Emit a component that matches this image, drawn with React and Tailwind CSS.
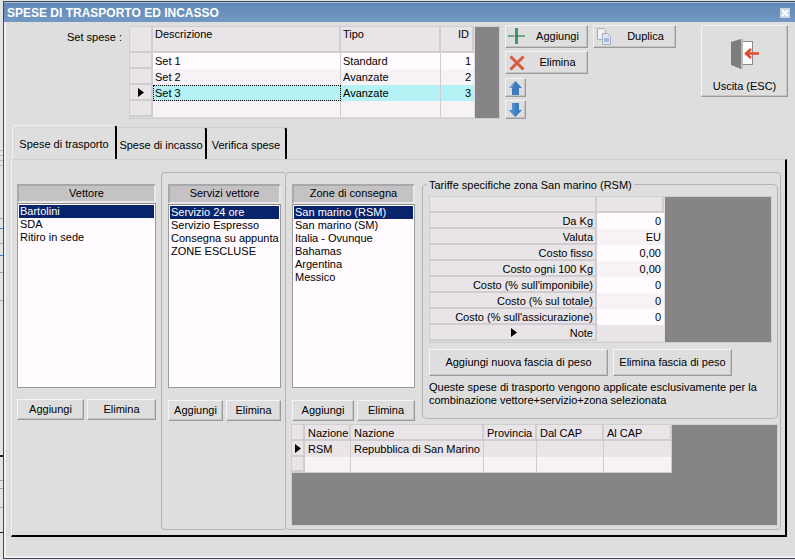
const Btn = ({ className = "", children }) => (
  <div className={"flex items-center justify-center bg-[#dedede] border border-t-[#f4f4f4] border-l-[#f4f4f4] border-r-[#9a9a9a] border-b-[#9a9a9a] shadow-[inset_-1px_-1px_0_#c4c4c4] text-black " + className}>{children}</div>
);
const Arrow = () => (
  <svg width="6" height="9" viewBox="0 0 6 9"><path d="M0 0l6 4.500L0 9z" fill="#000" /></svg>
);
const Plus = () => (
  <svg width="17" height="16" viewBox="0 0 17 16"><rect x="7" y="0" width="3" height="16" fill="#3f9a6b" /><rect x="0" y="7" width="17" height="2" fill="#6aa88a" /><rect x="6" y="7" width="1" height="2" fill="#e9a3c0" /><rect x="7" y="7" width="3" height="2" fill="#2f8a5b" /></svg>
);
const Cross = () => (
  <svg width="16" height="16" viewBox="0 0 16 16"><path d="M1.500 1.500l13 13M14.500 1.500l-13 13" stroke="#d9573f" strokeWidth="3" /></svg>
);
const Copy = () => (
  <svg width="16" height="17" viewBox="0 0 16 17">
    <path d="M1.500.5h6l2 2v9h-8z" fill="#eef1f5" stroke="#a9aeb5" />
    <path d="M6.500 5.500h5l3 3v8h-8z" fill="#dfe7f2" stroke="#a9aeb5" />
    <rect x="8" y="10" width="5" height="4" fill="#9dbbe0" />
  </svg>
);
const Up = () => (
  <svg width="13" height="14" viewBox="0 0 13 14"><path d="M6.500 0L13 7h-3v7H3V7H0z" fill="#3c7dc0" /><path d="M6.500 0L0 7h3z" fill="#6fa3d8" /></svg>
);
const Down = () => (
  <svg width="13" height="14" viewBox="0 0 13 14"><path d="M6.500 14L13 7h-3V0H3v7H0z" fill="#3c7dc0" /><path d="M3 0h3v14L0 7h3z" fill="#4f8cc9" /></svg>
);
const Door = () => (
  <svg width="28" height="31" viewBox="0 0 28 31">
    <rect x="10.500" y="3.500" width="11" height="23" fill="#fff" stroke="#8a8a8a" />
    <path d="M0 4l10-3v30L0 27z" fill="#7d7d7d" />
    <path d="M10 1h2v30h-2z" fill="#b8b8b8" />
    <path d="M28 15.500H16M20 11l-5 4.500 5 4.500" fill="none" stroke="#e0492f" strokeWidth="2.500" />
  </svg>
);

const rowHeader = "border-r-2 border-b-2 border-[#cfcdcf] bg-[#e8e4e8]";

function TopGrid() {
  const rows = [["Set 1", "Standard", "1", "bg-[#fffbff]"], ["Set 2", "Avanzate", "2", "bg-[#f6f2f6]"], ["Set 3", "Avanzate", "3", "bg-[#b4f2f6]"], ["", "", "", "bg-[#f6f2f6]"]];
  return (
    <div className="mt-[1px] w-[371px] h-[93px] flex bg-[#dedede] border border-[#cfcfcf]">
      <div className="w-[344px]">
        <div className="flex h-[26px] leading-[14px]">
          <div className={"w-[23px] " + rowHeader}></div>
          <div className={"w-[188px] pl-[2px] " + rowHeader}>Descrizione</div>
          <div className={"w-[100px] pl-[2px] " + rowHeader}>Tipo</div>
          <div className={"w-[33px] pr-[3px] text-right " + rowHeader}>ID</div>
        </div>
        {rows.map((r, i) => (
          <div key={i} className={"flex h-[16px] leading-[16px] " + r[3]}>
            <div className="w-[23px] flex items-center justify-center bg-[#e8e4e8] border-r-2 border-b-2 border-[#cfcdcf]">{i === 2 && <Arrow />}</div>
            <div className={"w-[188px] pl-[2px] border-r border-[#cfcdcf] " + (i === 2 ? "outline-1 outline-dotted outline-black -outline-offset-1" : "")}>{r[0]}</div>
            <div className="w-[100px] pl-[2px] border-r border-[#cfcdcf]">{r[1]}</div>
            <div className="w-[33px] pr-[3px] text-right">{r[2]}</div>
          </div>
        ))}
      </div>
      <div className="flex-1 ml-[1px] bg-[#868486]"></div>
    </div>
  );
}

function ListCol({ title, items, w, headH = 20, listH = 184, btnGap = 12, bw, eb, btnH = 19 }) {
  return (
    <div className="flex flex-col" style={{ width: w }}>
      <div className="bg-[#c4c2c4] border-2 border-t-[#a8a8a8] border-l-[#a8a8a8] border-r-[#e8e8e8] border-b-[#e8e8e8] pb-[1px] flex items-center justify-center" style={{ height: headH }}>{title}</div>
      <div className="bg-[#fffbff] border border-[#9a9a9a] border-t-[#8a8a8a] p-[1px] overflow-hidden" style={{ height: listH }}>
        {items.map((t, i) => (
          <div key={t} className={"h-[13px] leading-[13px] pl-[1px] whitespace-nowrap overflow-hidden " + (i === 0 ? "bg-[#08246b] text-white" : "")}>{t}</div>
        ))}
      </div>
      <div className="flex justify-between" style={{ marginTop: btnGap }}>
        <Btn><span style={{ width: bw, height: btnH }} className="flex items-center justify-center">Aggiungi</span></Btn>
        <Btn><span style={{ width: eb, height: btnH }} className="flex items-center justify-center">Elimina</span></Btn>
      </div>
    </div>
  );
}

function Tariffe() {
  const rows = [["Da Kg", "0"], ["Valuta", "EU"], ["Costo fisso", "0,00"], ["Costo ogni 100 Kg", "0,00"], ["Costo (% sull'imponibile)", "0"], ["Costo (% sul totale)", "0"], ["Costo (% sull'assicurazione)", "0"], ["Note", ""]];
  return (
    <div className="relative ml-[7px] w-[356px] h-[235px] border border-[#b4b4b4] rounded-[5px] pt-[11px] pl-[6px]">
      <div className="absolute left-[4px] -top-[7px] bg-[#dedede] px-[2px] leading-[14px] whitespace-nowrap">Tariffe specifiche zona San marino (RSM)</div>
      <div className="w-[343px] h-[147px] flex border border-[#cfcfcf] bg-[#dedede]">
        <div className="w-[234px]">
          <div className="flex h-[16px]">
            <div className={"w-[167px] " + rowHeader}></div>
            <div className={"w-[67px] " + rowHeader}></div>
          </div>
          {rows.map((r, i) => (
            <div key={r[0]} className="flex h-[16px] leading-[16px]">
              <div className={"relative w-[167px] pr-[2px] text-right " + rowHeader}>
                {i === 7 && <span className="absolute left-[81px] top-[3px] leading-none"><Arrow /></span>}
                {r[0]}
              </div>
              <div className={"w-[67px] pr-[3px] text-right " + (i === 7 ? "bg-[#e8e4e8]" : i % 2 === 0 ? "bg-[#fffbff]" : "bg-[#f6f2f6]")}>{r[1]}</div>
            </div>
          ))}
        </div>
        <div className="flex-1 ml-[1px] bg-[#868486]"></div>
      </div>
      <div className="flex gap-[5px] mt-[6px]">
        <Btn className="w-[179px] h-[27px]">Aggiungi nuova fascia di peso</Btn>
        <Btn className="w-[119px] h-[27px]">Elimina fascia di peso</Btn>
      </div>
      <div className="mt-[5px] leading-[13px] w-[345px]">Queste spese di trasporto vengono applicate esclusivamente per la combinazione vettore+servizio+zona selezionata</div>
    </div>
  );
}

function BottomGrid() {
  const cols = [["Nazione", "w-[46px]"], ["Nazione", "w-[133px]"], ["Provincia", "w-[53px]"], ["Dal CAP", "w-[67px]"], ["Al CAP", "w-[68px]"]];
  const vals = ["RSM", "Repubblica di San Marino", "", "", ""];
  const cell = "pl-[3px] border-r border-[#cfcdcf] whitespace-nowrap ";
  return (
    <div className="mt-[3px] ml-[5px] h-[102px] w-[487px] bg-[#868486] border border-[#cfcfcf] overflow-hidden">
      <div className="w-[380px]">
        <div className="flex h-[16px] leading-[16px]">
          <div className={"w-[13px] " + rowHeader}></div>
          {cols.map((c, i) => <div key={i} className={c[1] + " pl-[3px] " + rowHeader}>{c[0]}</div>)}
        </div>
        <div className="flex h-[16px] leading-[16px] bg-[#e8e4e8]">
          <div className={"w-[13px] flex items-center justify-center " + rowHeader}><Arrow /></div>
          {cols.map((c, i) => <div key={i} className={c[1] + " " + cell}>{vals[i]}</div>)}
        </div>
        <div className="flex h-[16px] bg-[#f6f2f6] border-b border-[#cfcdcf]">
          <div className={"w-[13px] " + rowHeader}></div>
          {cols.map((c, i) => <div key={i} className={c[1] + " " + cell}></div>)}
        </div>
      </div>
    </div>
  );
}

const bits = [[150, "#bdbdbd", 1], [155, "#bdbdbd", 1], [160, "#bdbdbd", 1], [165, "#bdbdbd", 1], [218, "#a8a8a8", 1], [228, "#3c7dc0", 1], [243, "#a8a8a8", 1], [255, "#3c7dc0", 1], [272, "#a8a8a8", 1], [300, "#a8a8a8", 1], [455, "#222222", 2], [480, "#a8a8a8", 1], [488, "#a8a8a8", 1], [507, "#a8a8a8", 1], [532, "#222222", 1]];

export default function App() {
  return (
    <div className="relative w-[795px] h-[560px] overflow-hidden bg-[#e4e4e4] pl-[3px] pt-[1px] text-[11px] text-black" style={{ fontFamily: '"Liberation Sans", Arial, sans-serif' }}>
      {bits.map((b, i) => <span key={i} className="absolute left-0 w-[3px]" style={{ top: b[0], height: b[2], background: b[1] }}></span>)}
      <div className="w-[792px] h-[558px] border-t border-l border-b border-[#3c4a5c] bg-[#dedede] flex flex-col">
        <div className="h-[20px] flex items-center justify-between pl-[3px] pr-[5px] bg-gradient-to-b from-[#6289b6] to-[#7299c4] border-t border-[#a9bfd8] text-white font-bold text-[12px]">
          <span>SPESE DI TRASPORTO ED INCASSO</span>
          <span className="w-[10px] h-[10px] bg-[#c5d3e3] flex items-center justify-center">
            <svg width="8" height="8" viewBox="0 0 8 8"><path d="M1 1l6 6M7 1L1 7" stroke="#ffffff" strokeWidth="2" /></svg>
          </span>
        </div>
        <div className="flex-1 flex flex-col border-l-2 border-b-2 border-[#f0f0f0] pl-[1px]">
          <div className="flex h-[103px] pt-[3px]">
            <div className="w-[122px] pt-[4px] pr-[7px] text-right whitespace-nowrap">Set spese :</div>
            <TopGrid />
            <div className="ml-[5px] w-[83px] flex flex-col">
              <Btn className="h-[23px] relative pl-[22px]"><span className="absolute left-[2px] top-[2px]"><Plus /></span>Aggiungi</Btn>
              <Btn className="h-[23px] relative mt-[3px] pl-[22px]"><span className="absolute left-[3px] top-[3px]"><Cross /></span>Elimina</Btn>
              <Btn className="w-[21px] h-[19px] mt-[4px]"><Up /></Btn>
              <Btn className="w-[21px] h-[19px] mt-[3px]"><Down /></Btn>
            </div>
            <Btn className="ml-[5px] w-[83px] h-[23px] relative pl-[22px]"><span className="absolute left-[2px] top-[2px]"><Copy /></span>Duplica</Btn>
            <Btn className="ml-[25px] w-[87px] h-[72px] flex-col !justify-start gap-[11px] pt-[12px]"><Door /><span className="leading-[13px]">Uscita (ESC)</span></Btn>
          </div>
          <div className="flex items-end h-[34px] pl-[5px]">
            <div className="h-[34px] pt-[3px] w-[105px] border-r-2 border-r-black border-t border-l border-[#f0f0f0] rounded-t-[3px] flex items-center justify-center">Spese di trasporto</div>
            <div className="h-[32px] pt-[3px] w-[90px] border-r-2 border-r-black border-t border-[#d0d0d0] rounded-t-[3px] flex items-center justify-center">Spese di incasso</div>
            <div className="h-[32px] pt-[3px] w-[80px] border-r-2 border-r-black border-t border-[#d0d0d0] rounded-t-[3px] flex items-center justify-center">Verifica spese</div>
          </div>
          <div className="ml-[4px] w-[776px] h-[378px] border-t border-t-[#d0d0d0] border-l border-l-[#f0f0f0] border-r-2 border-b-2 border-r-black border-b-black flex pl-[5px] pt-[12px]">
            <div className="w-[144px] pt-[12px] shrink-0">
              <ListCol title="Vettore" items={["Bartolini", "SDA", "Ritiro in sede"]} w={139} headH={19} listH={185} btnGap={11} bw={65} eb={67} />
            </div>
            <div className="w-[124px] h-[358px] border-t border-b border-l border-[#b4b4b4] rounded-l-[4px] pl-[6px] pt-[11px] shrink-0">
              <ListCol title="Servizi vettore" items={["Servizio 24 ore", "Servizio Espresso", "Consegna su appuntamento", "ZONE ESCLUSE"]} w={113} bw={53} eb={53} />
            </div>
            <div className="w-[496px] h-[358px] border border-[#b4b4b4] rounded-[4px] pt-[11px] shrink-0">
              <div className="flex pl-[6px]">
                <ListCol title="Zone di consegna" items={["San marino (RSM)", "San marino (SM)", "Italia - Ovunque", "Bahamas", "Argentina", "Messico"]} w={123} bw={60} eb={56} />
                <Tariffe />
              </div>
              <BottomGrid />
            </div>
          </div>
        </div>
      </div>
    </div>
  );
}
